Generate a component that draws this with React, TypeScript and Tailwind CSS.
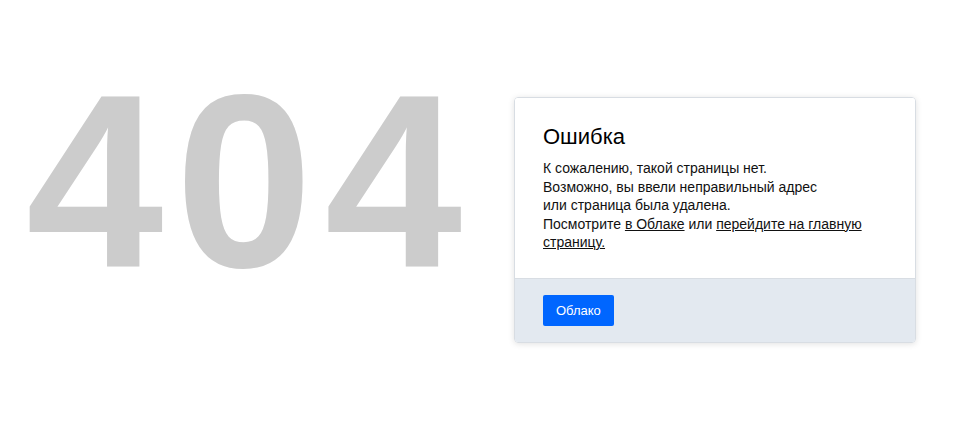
export default function App() {
  return (
    <div className="w-full h-[427px] bg-white flex items-center font-['Liberation_Sans',Arial,sans-serif]">
      <div className="pl-[26px] w-[514px] shrink-0 -mt-[64px]">
        <div className="text-[247px] leading-none font-bold text-[#cccccc] tracking-[12px] select-none">404</div>
      </div>
      <div className="w-[402px] mt-[13px] border border-[#d8dde3] rounded-[4px] shadow-[0_1px_6px_rgba(0,0,0,0.12)] overflow-hidden">
        <div className="bg-white px-[28px] pt-[24px] pb-[26px]">
          <h1 className="text-[22px] leading-[30px] text-black mb-[7px]">Ошибка</h1>
          <p className="text-[14px] leading-[18.5px] text-[#111]">
            К сожалению, такой страницы нет.
            <br />
            Возможно, вы ввели неправильный адрес
            <br />
            или страница была удалена.
            <br />
            Посмотрите <a href="#" className="underline">в Облаке</a> или{" "}
            <a href="#" className="underline">перейдите на главную страницу.</a>
          </p>
        </div>
        <div className="bg-[#e3e9f0] border-t border-[#d8dde3] px-[28px] pt-[16px] pb-[16px]">
          <button className="h-[31px] px-[13px] bg-[#0066ff] text-white text-[13px] rounded-[2px]">Облако</button>
        </div>
      </div>
    </div>
  );
}
